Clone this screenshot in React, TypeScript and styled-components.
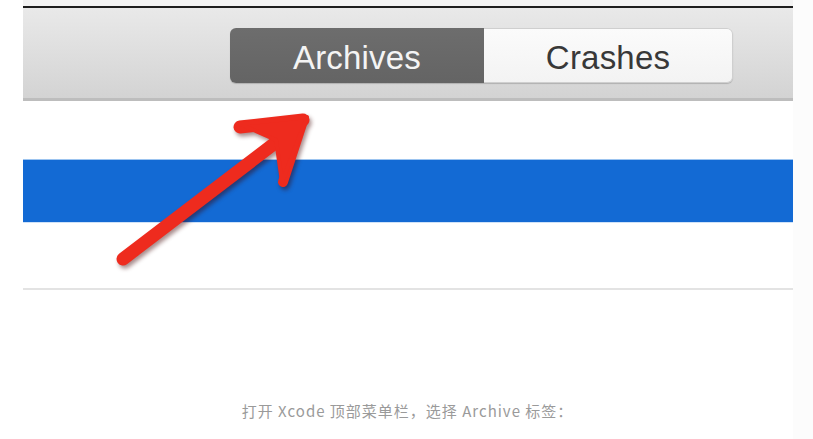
import React from 'react';
import styled, { createGlobalStyle } from 'styled-components';

const GlobalStyle = createGlobalStyle`
	html, body {
		margin: 0;
		padding: 0;
		background: #ffffff;
	}
	body {
		font-family: 'Liberation Sans', Arial, sans-serif;
	}
`;

const Page = styled.div`
	width: 813px;
	height: 439px;
	display: flex;
	overflow: hidden;
	background: #ffffff;
`;

const Column = styled.div`
	width: 793px;
	display: flex;
	flex-direction: column;
`;

const Gutter = styled.div`
	width: 20px;
	background: #fcfcfc;
`;

const Shot = styled.div`
	position: relative;
	margin-left: 23px;
	width: 770px;
	display: flex;
	flex-direction: column;
`;

const TitleEdge = styled.div`
	height: 6px;
	background: #f3f3f3;
	border-bottom: 2px solid #1e1e1e;
`;

const Toolbar = styled.div`
	height: 93px;
	display: flex;
	align-items: flex-start;
	padding-top: 20px;
	padding-left: 207px;
	box-sizing: border-box;
	background: linear-gradient(to bottom, #e9e9e9 0%, #dcdcdc 60%, #d3d3d3 100%);
	border-bottom: 3px solid #bdbdbd;
`;

const Segmented = styled.div`
	display: flex;
	height: 55px;
	border-radius: 6px;
	overflow: hidden;
	box-shadow: 0 1px 1px rgba(0, 0, 0, 0.18);
`;

const Segment = styled.div<{ $active?: boolean; $width: number }>`
	width: ${(p) => p.$width}px;
	display: flex;
	align-items: center;
	justify-content: center;
	font-family: 'Liberation Sans', Arial, sans-serif;
	font-size: 33px;
	letter-spacing: 0.2px;
	color: ${(p) => (p.$active ? '#f4f4f4' : '#383838')};
	background: ${(p) =>
		p.$active
			? 'linear-gradient(to bottom, #6d6d6d, #646464)'
			: 'linear-gradient(to bottom, #fbfbfb, #f3f3f3)'};
	border: ${(p) => (p.$active ? 'none' : '1px solid #cfcfcf')};
	border-left: none;
	border-radius: ${(p) => (p.$active ? '0' : '0 6px 6px 0')};
	box-sizing: border-box;
	padding-top: 4px;
`;

const Gap = styled.div<{ $h: number }>`
	height: ${(p) => p.$h}px;
	background: #ffffff;
`;

const SelectedRow = styled.div`
	height: 62px;
	background: #136ad4;
	border-top: 1px solid #9cc4f0;
	border-bottom: 1px solid #cfe2f8;
`;

const Divider = styled.div`
	height: 2px;
	background: #e3e3e3;
`;

const Arrow = styled.svg`
	position: absolute;
	left: 0;
	top: 0;
	width: 770px;
	height: 300px;
	overflow: visible;
	filter: drop-shadow(2px 3px 2px rgba(60, 0, 0, 0.45));
`;

const Caption = styled.p`
	margin: 110px 0 0;
	padding-left: 22px;
	text-align: center;
	font-family: 'Microsoft YaHei', 'Noto Sans CJK SC', sans-serif;
	font-size: 15px;
	letter-spacing: 1px;
	color: #9a9a9a;
`;

const App: React.FC = () => {
	return (
		<>
			<GlobalStyle />
			<Page>
				<Column>
					<Shot>
						<TitleEdge />
						<Toolbar>
							<Segmented>
								<Segment $active $width={254}>
									Archives
								</Segment>
								<Segment $width={249}>Crashes</Segment>
							</Segmented>
						</Toolbar>
						<Gap $h={58} />
						<SelectedRow />
						<Gap $h={65} />
						<Divider />
						{/* hand-drawn pointer towards the tab */}
						<Arrow viewBox="23 0 770 300">
							<g fill="#ee2b1e" stroke="#ee2b1e" strokeLinecap="round" strokeLinejoin="round">
								<line x1="123" y1="259" x2="296" y2="127" strokeWidth="13" />
								<line x1="240" y1="127" x2="303" y2="120" strokeWidth="13" />
								<line x1="303" y1="121" x2="283" y2="182" strokeWidth="10" />
								<polygon points="240,124 307,117 282,182 276,140" strokeWidth="4" />
							</g>
						</Arrow>
					</Shot>
					<Caption>打开 Xcode 顶部菜单栏，选择 Archive 标签：</Caption>
				</Column>
				<Gutter />
			</Page>
		</>
	);
};

export default App;
